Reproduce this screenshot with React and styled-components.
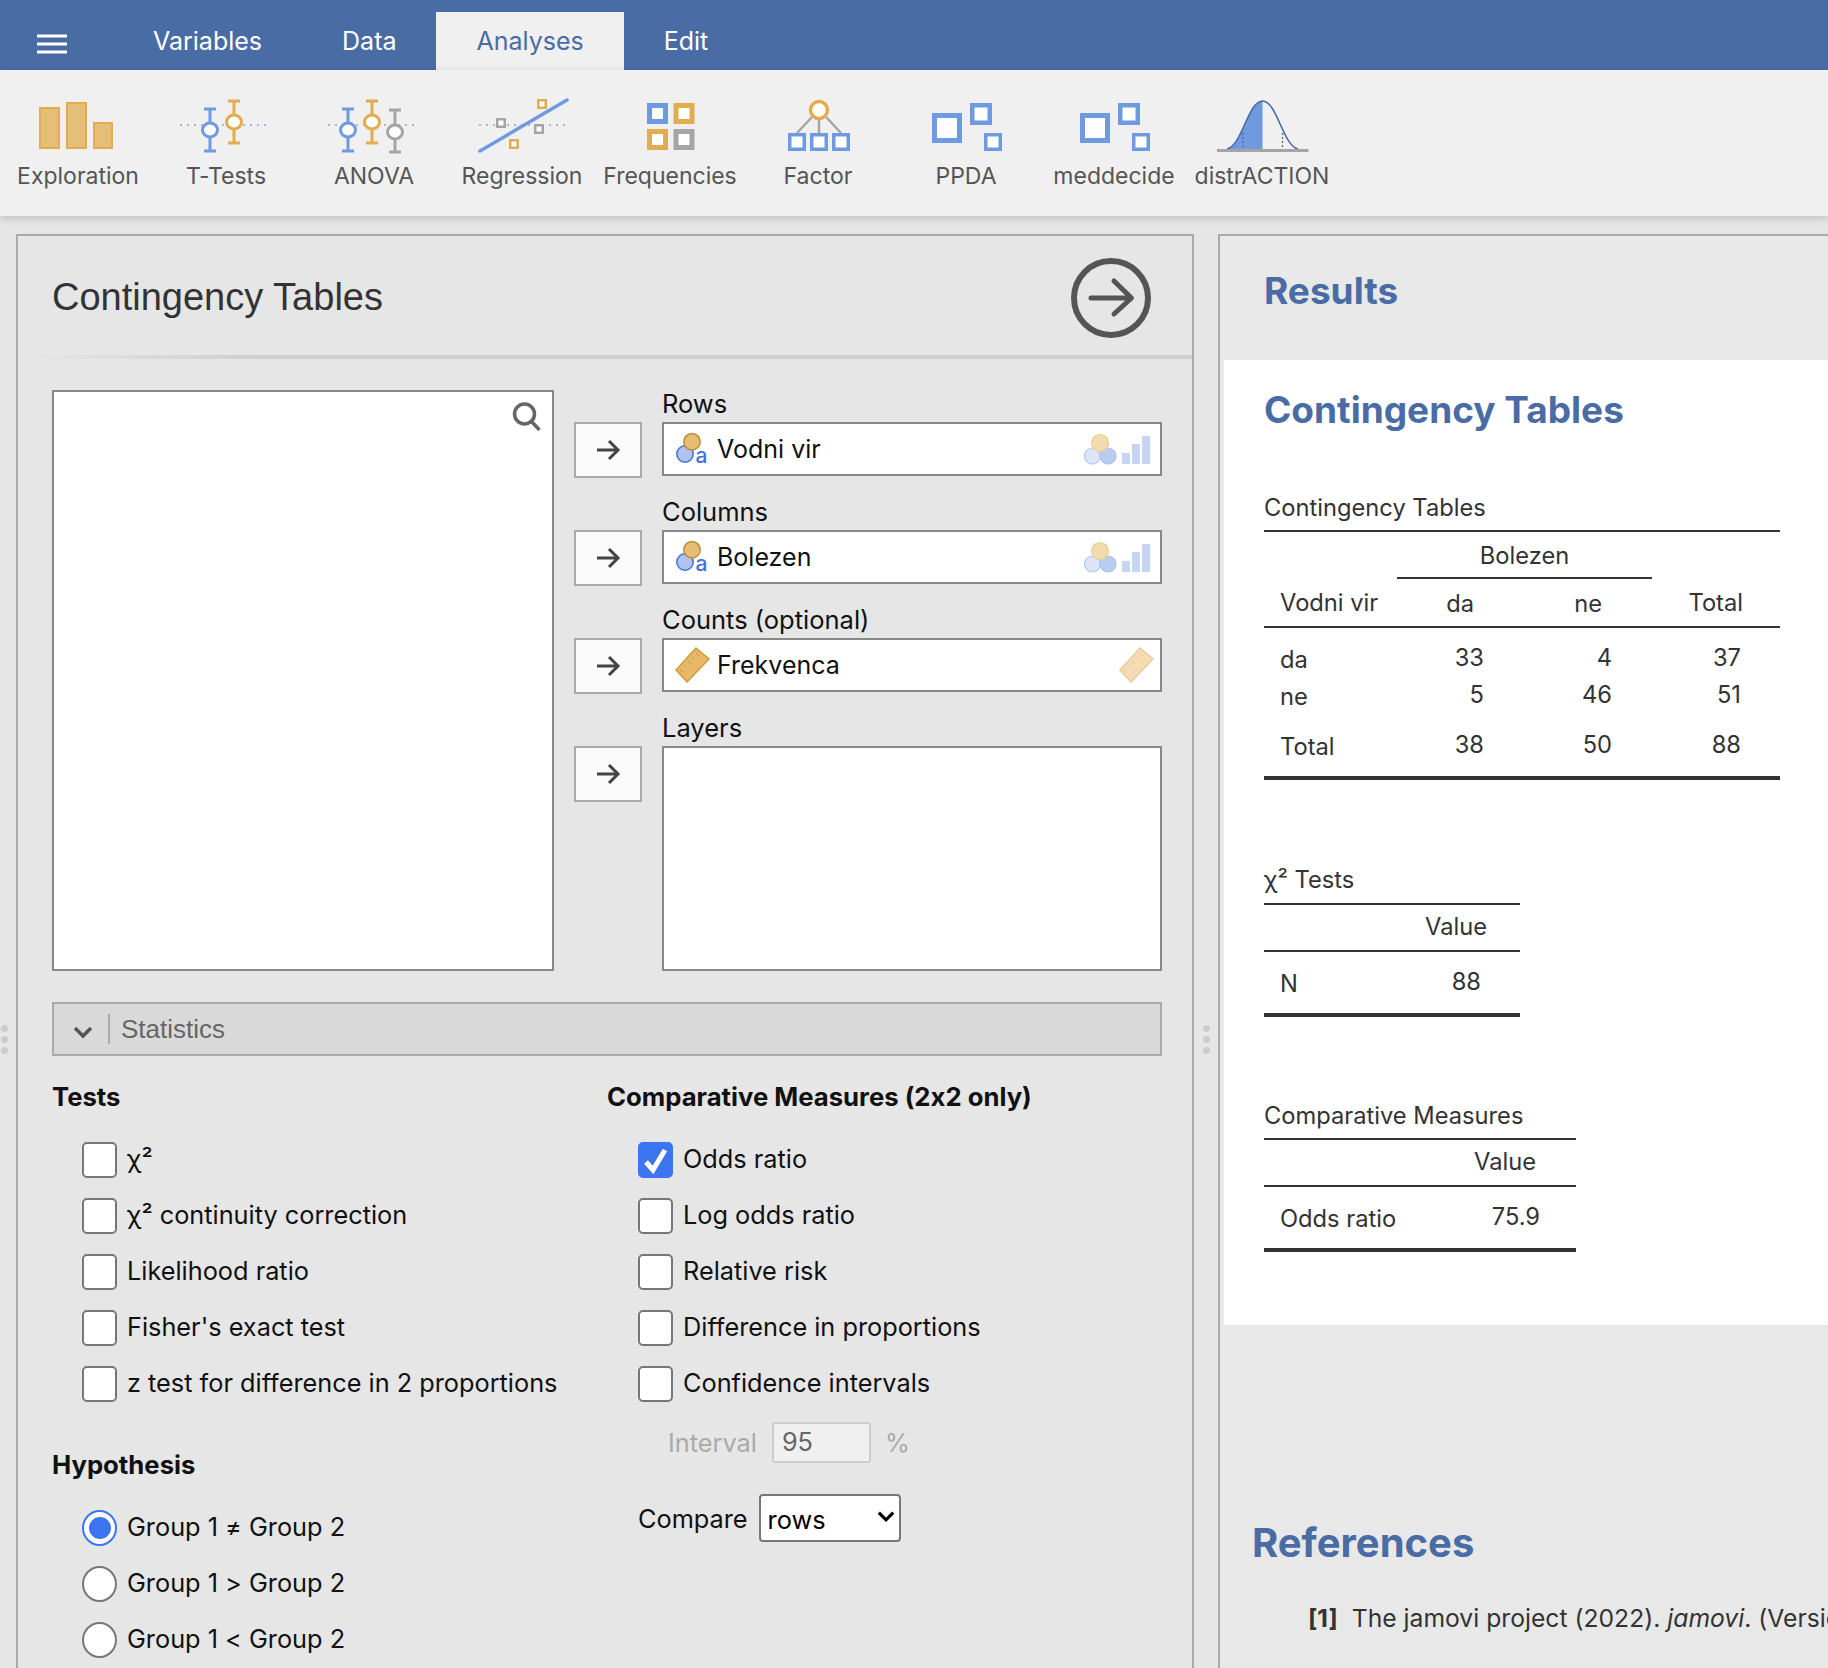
import React from "react";
import styled, { createGlobalStyle } from "styled-components";

const GlobalStyle = createGlobalStyle`
  html, body {
    margin: 0;
    height: 100%;
    overflow: hidden;
    font-family: Inter, "Liberation Sans", sans-serif;
    font-feature-settings: "calt" 0;
    color: #111;
  }
  * { box-sizing: border-box; }
`;

const Page = styled.div`
  height: 100vh;
  display: flex;
  flex-direction: column;
  background: #e6e6e6;
  overflow: hidden;
`;

const TopBar = styled.div`
  height: 70px;
  flex: none;
  display: flex;
  align-items: flex-end;
  background: #4a6ca5;
`;

const MenuButton = styled.div`
  width: 113px;
  height: 70px;
  padding: 34px 0 0 37px;
  svg { display: block; }
`;

const Tab = styled.div`
  height: 58px;
  padding: 0 40px;
  display: flex;
  align-items: center;
  font-size: 25px;
  color: ${(p) => (p.$active ? "#4a6ca5" : "#fff")};
  background: ${(p) => (p.$active ? "#f0f0f0" : "transparent")};
`;

const Toolbar = styled.div`
  height: 146px;
  flex: none;
  display: flex;
  padding: 28px 0 0 4px;
  background: #f0f0f0;
  box-shadow: 0 2px 8px rgba(0, 0, 0, 0.18);
  position: relative;
`;

const Tool = styled.div`
  width: 148px;
  display: flex;
  flex-direction: column;
  align-items: center;
  font-size: 23px;
  line-height: 34px;
  color: #555;
  white-space: nowrap;
  svg { display: block; flex: none; margin-bottom: 1px; }
`;

const Main = styled.div`
  flex: 1;
  min-height: 0;
  display: flex;
  padding-top: 18px;
`;

const Splitter = styled.div`
  width: ${(p) => p.$width}px;
  flex: none;
  padding: 791px 0 0 ${(p) => p.$inset || 0}px;
  display: flex;
  flex-direction: column;
  align-items: ${(p) => (p.$inset ? "flex-start" : "center")};
  gap: 4px;
  i {
    width: 7px;
    height: 7px;
    border-radius: 50%;
    background: #ccc;
  }
`;

const OptionsPanel = styled.div`
  width: 1178px;
  flex: none;
  border: 2px solid #aaa;
  border-bottom: 0;
`;

const PanelHeader = styled.div`
  height: 123px;
  display: flex;
  align-items: center;
  justify-content: space-between;
  padding: 4px 41px 0 34px;
  border-bottom: 4px solid;
  border-image: linear-gradient(to right, transparent 1%, #cfcfcf 20%) 1;
  h1 {
    margin: 0;
    font-family: "Liberation Sans", Arial, sans-serif;
    font-size: 38px;
    font-weight: 400;
    color: #333;
  }
`;

const PanelBody = styled.div`
  padding: 31px 30px 0 34px;
`;

const Supplier = styled.div`
  height: 581px;
  display: grid;
  grid-template-columns: 502px 1fr;
  gap: 20px;
`;

const VariableList = styled.div`
  position: relative;
  background: #fff;
  border: 2px solid #888;
  svg { position: absolute; top: 10px; right: 11px; }
`;

const Targets = styled.div`
  display: flex;
  flex-direction: column;
  gap: 20px;
`;

const TargetRow = styled.div`
  display: grid;
  grid-template-columns: 68px 500px;
  column-gap: 20px;
  grid-template-rows: 32px 56px;
  flex: ${(p) => (p.$grow ? 1 : "none")};
  ${(p) => p.$grow && "grid-template-rows: 32px 1fr;"}
`;

const TargetLabel = styled.div`
  grid-column: 2;
  font-size: 25.5px;
  line-height: 27px;
`;

const ArrowButton = styled.div`
  grid-column: 1;
  height: 56px;
  display: flex;
  align-items: center;
  justify-content: center;
  background: #fafafa;
  border: 2px solid #aaa;
`;

const Field = styled.div`
  grid-column: 2;
  height: ${(p) => (p.$grow ? "100%" : "54px")};
  display: flex;
  align-items: center;
  justify-content: space-between;
  padding: 0 10px;
  background: #fff;
  border: 2px solid #888;
  font-size: 25px;
`;

const FieldName = styled.div`
  display: flex;
  align-items: center;
  gap: 7px;
`;

const HintRuler = styled.span`
  display: flex;
  margin-right: -4px;
`;

const SectionBar = styled.div`
  height: 54px;
  margin-top: 31px;
  display: flex;
  align-items: center;
  background: #d9d9d9;
  border: 2px solid #aaa;
  color: #666;
  font-family: "Liberation Sans", Arial, sans-serif;
  font-size: 26px;
  svg { margin: 6px 0 0 19px; }
  span {
    height: 30px;
    margin-left: 15px;
    padding-left: 11px;
    border-left: 2px solid #aaa;
    line-height: 30px;
  }
`;

const Columns = styled.div`
  display: grid;
  grid-template-columns: 555px 1fr;
`;

const GroupTitle = styled.div`
  margin: ${(p) => p.$top}px 0 29px;
  font-size: 25.7px;
  line-height: 32px;
  font-weight: 700;
`;

const OptionList = styled.div`
  display: flex;
  flex-direction: column;
  gap: 20px;
  padding-left: ${(p) => p.$indent}px;
`;

const Option = styled.div`
  height: 36px;
  display: flex;
  align-items: center;
  gap: 10px;
  font-size: 25.3px;
  span { margin-top: -3px; }
`;

const Check = styled.div`
  width: 35px;
  height: 36px;
  flex: none;
  display: flex;
  align-items: center;
  justify-content: center;
  border-radius: 5px;
  border: 2px solid ${(p) => (p.$on ? "#3c75f0" : "#777")};
  background: ${(p) => (p.$on ? "#3c75f0" : "#fff")};
`;

const Radio = styled.div`
  width: 35px;
  height: 36px;
  flex: none;
  border-radius: 50%;
  border: 2px solid ${(p) => (p.$on ? "#3c75f0" : "#777")};
  background: #fff;
  display: flex;
  align-items: center;
  justify-content: center;
  i {
    width: 22px;
    height: 22px;
    border-radius: 50%;
    background: #3c75f0;
  }
`;

const IntervalRow = styled.div`
  margin: 20px 0 0 61px;
  height: 41px;
  display: flex;
  align-items: center;
  font-size: 25.3px;
  color: #aaa;
`;

const IntervalInput = styled.div`
  width: 99px;
  height: 41px;
  margin: 0 14px 0 15px;
  padding-left: 8px;
  border: 2px solid #ccc;
  border-radius: 3px;
  background: #f0f0f0;
  color: #666;
  line-height: 35px;
`;

const CompareRow = styled.div`
  margin: 31px 0 0 31px;
  display: flex;
  align-items: center;
  gap: 11px;
  font-size: 25.3px;
`;

const SelectWrap = styled.div`
  position: relative;
  width: 142px;
  height: 48px;
  svg { position: absolute; top: 16px; right: 6px; pointer-events: none; }
`;

const Select = styled.select`
  appearance: none;
  width: 100%;
  height: 100%;
  padding: 2px 0 0 7px;
  border: 2px solid #777;
  border-radius: 4px;
  background: #fff;
  font: inherit;
  color: #000;
`;

const ResultsPanel = styled.div`
  flex: 1;
  min-width: 0;
  padding-left: 4px;
  border-top: 2px solid #aaa;
  border-left: 2px solid #aaa;
  background: #e8e8e8;
  overflow: hidden;
`;

const Heading = styled.h2`
  margin: ${(p) => p.$margin};
  font-size: ${(p) => p.$size || 37}px;
  line-height: 50px;
  font-weight: 700;
  color: #4a6ca5;
`;

const ResultsSheet = styled.div`
  margin-top: 44px;
  padding: 25px 0 73px 40px;
  background: #fff;
  color: #333;
  font-size: 23.7px;
`;

const TableBlock = styled.div`
  width: ${(p) => p.$width}px;
  margin-top: ${(p) => p.$top}px;
  border-bottom: 4px solid #333;
`;

const TableTitle = styled.div`
  line-height: 34px;
  padding-bottom: ${(p) => p.$pad}px;
  border-bottom: 2px solid #333;
`;

const Table = styled.table`
  width: 100%;
  table-layout: fixed;
  border-collapse: collapse;
`;

const Row = styled.tr`
  height: ${(p) => p.$h}px;
  border-bottom: ${(p) => (p.$line ? "2px solid #333" : "0")};
`;

const Cell = styled.td`
  padding: ${(p) => p.$top || 0}px ${(p) => p.$right || 0}px 0 ${(p) => p.$left || 0}px;
  vertical-align: top;
  line-height: 30px;
  text-align: ${(p) => p.$align || "right"};
  border-bottom: ${(p) => (p.$line ? "2px solid #333" : "0")};
`;

const RefLine = styled.div`
  margin: 33px 0 0 84px;
  display: flex;
  gap: 14px;
  font-size: 24.7px;
  line-height: 34px;
  color: #333;
  white-space: nowrap;
  b { font-weight: 700; }
`;

const Whisker = ({ x, y1, y2, cy, color }) => (
  <g stroke={color} strokeWidth="3" fill="none">
    <path d={`M${x} ${y1}V${y2}M${x - 6} ${y1}H${x + 6}M${x - 6} ${y2}H${x + 6}`} />
    <ellipse cx={x} cy={cy} rx="7.5" ry="7" fill="#fff" />
  </g>
);

const DotLine = ({ x1, x2 }) => (
  <path d={`M${x1} 27H${x2}`} stroke="#6b7f9e" strokeWidth="1.2" strokeDasharray="2 5" />
);

const Square = ({ x, y, s, w, color }) => (
  <rect x={x + w / 2} y={y + w / 2} width={s - w} height={s - w} fill="#fff" stroke={color} strokeWidth={w} />
);

const Blue = "#6f9ae0";
const Orange = "#e2ad50";
const Gray = "#a5a5a5";

const ExplorationIcon = () => (
  <svg width="100" height="60">
    <g fill="#e6bf76" stroke={Orange} strokeWidth="2">
      <rect x="12" y="10" width="19" height="40" />
      <rect x="39" y="5" width="19" height="45" />
      <rect x="66" y="25" width="18" height="25" />
    </g>
  </svg>
);

const TTestsIcon = () => (
  <svg width="100" height="60">
    <DotLine x1="4" x2="94" />
    <Whisker x={34} y1={11} y2={53} cy={32} color={Blue} />
    <Whisker x={58} y1={3} y2={45} cy={24} color={Orange} />
  </svg>
);

const AnovaIcon = () => (
  <svg width="100" height="60">
    <DotLine x1="4" x2="93" />
    <Whisker x={24} y1={11} y2={53} cy={32} color={Blue} />
    <Whisker x={48} y1={3} y2={45} cy={24} color={Orange} />
    <Whisker x={71} y1={12} y2={54} cy={34} color={Gray} />
  </svg>
);

const RegressionIcon = () => (
  <svg width="100" height="60">
    <DotLine x1="7" x2="97" />
    <path d="M8 53L95 2" stroke={Blue} strokeWidth="3.5" strokeLinecap="round" />
    <Square x={24} y={20} s={10} w={2.5} color={Gray} />
    <Square x={65} y={1} s={10} w={2.5} color={Orange} />
    <Square x={62} y={26} s={10} w={2.5} color={Gray} />
    <Square x={37} y={41} s={10} w={2.5} color={Orange} />
  </svg>
);

const FrequenciesIcon = () => (
  <svg width="100" height="60">
    <Square x={27} y={5} s={21} w={5} color={Blue} />
    <Square x={53.5} y={5} s={21} w={5} color={Orange} />
    <Square x={27} y={31} s={21} w={5} color={Orange} />
    <Square x={53.5} y={31} s={21} w={5} color={Gray} />
  </svg>
);

const FactorIcon = () => (
  <svg width="100" height="60">
    <path d="M44 19L29 35M51 20V35M58 19L73 35" stroke={Gray} strokeWidth="2.5" fill="none" />
    <ellipse cx="51" cy="12" rx="8.5" ry="8.5" fill="#fff" stroke={Orange} strokeWidth="3.5" />
    <Square x={20} y={35} s={18} w={3.5} color={Blue} />
    <Square x={42} y={35} s={18} w={3.5} color={Blue} />
    <Square x={64} y={35} s={18} w={3.5} color={Blue} />
  </svg>
);

const ModulesIcon = () => (
  <svg width="100" height="60">
    <Square x={16} y={15} s={30} w={5} color={Blue} />
    <Square x={54} y={5} s={22} w={4.5} color={Blue} />
    <Square x={68} y={35} s={18} w={3.5} color={Blue} />
  </svg>
);

const DistrIcon = () => (
  <svg width="100" height="60">
    <path d="M15 51C30 48 36 3 50.5 3V51Z" fill={Blue} />
    <path d="M15 51C30 48 36 3 50.5 3C65 3 71 48 86 51" fill="none" stroke="#4a6ca5" strokeWidth="1.5" />
    <path d="M31 35V51M70.5 35V51" stroke="#4a6ca5" strokeWidth="1.3" strokeDasharray="2 2" />
    <path d="M5 52.5H96.5" stroke={Gray} strokeWidth="3" />
  </svg>
);

const tools = [
  ["Exploration", ExplorationIcon],
  ["T-Tests", TTestsIcon],
  ["ANOVA", AnovaIcon],
  ["Regression", RegressionIcon],
  ["Frequencies", FrequenciesIcon],
  ["Factor", FactorIcon],
  ["PPDA", ModulesIcon],
  ["meddecide", ModulesIcon],
  ["distrACTION", DistrIcon],
];

const MenuIcon = () => (
  <svg width="30" height="20">
    <path d="M0 2H30M0 10H30M0 18H30" stroke="#fff" strokeWidth="3" />
  </svg>
);

const SearchIcon = () => (
  <svg width="30" height="30" fill="none" stroke="#666" strokeWidth="3.5">
    <circle cx="13.5" cy="12" r="10" />
    <path d="M21 20L28.5 28" />
  </svg>
);

const RunIcon = () => (
  <svg width="80" height="80" fill="none" stroke="#555" strokeLinecap="round" strokeLinejoin="round">
    <circle cx="40" cy="40" r="37" strokeWidth="6" />
    <path d="M20 40H60M43 23L60.5 40L43 56" strokeWidth="5" />
  </svg>
);

const ArrowIcon = () => (
  <svg width="26" height="22" fill="none" stroke="#444" strokeWidth="3">
    <path d="M2 11H23M14 2L23 11L14 20" />
  </svg>
);

const NominalTextIcon = () => (
  <svg width="36" height="38">
    <circle cx="11" cy="24" r="8.2" fill="#aec4ee" stroke="#3f72dc" strokeWidth="1.5" />
    <circle cx="18" cy="11.7" r="8.2" fill="#e8bd72" stroke="#b98a3c" strokeWidth="1.5" />
    <text x="21.5" y="33" fontSize="21" fontWeight="500" fill="#3f72dc">a</text>
  </svg>
);

const NominalHintIcon = () => (
  <svg width="66" height="32">
    <circle cx="8.5" cy="23" r="8" fill="#dbe5f7" stroke="#b4c9f0" strokeWidth="1.2" />
    <circle cx="24" cy="23" r="8" fill="#b9cdf1" stroke="#a7c0ee" strokeWidth="1.2" />
    <circle cx="16" cy="10" r="8.5" fill="#f2dcae" stroke="#e8cd97" strokeWidth="1.2" />
    <rect x="38" y="20" width="8" height="11" fill="#c5d5f2" />
    <rect x="48" y="11" width="8" height="20" fill="#c5d5f2" />
    <rect x="58" y="3" width="8" height="28" fill="#c5d5f2" />
  </svg>
);

const RulerIcon = ({ faded }) => (
  <svg width="36" height="36" opacity={faded ? 0.5 : 1}>
    <path d="M22 1L35 12L13 35L2 23Z" fill="#e8b868" stroke="#d49a3e" strokeWidth="1.5" />
    <path d="M22 6L25 9M18 10L20 12M14 14L17 17M10 18L12 20M6 22L9 25" stroke="#c9943a" strokeWidth="1" />
  </svg>
);

const ChevronIcon = ({ size = 20, width = 3.5, color = "#555" }) => (
  <svg width={size} height={size * 0.7} viewBox="0 0 20 14" fill="none" stroke={color} strokeWidth={width}>
    <path d="M2 3L10 11L18 3" />
  </svg>
);

const tick = (
  <svg width="25" height="27" fill="none" stroke="#fff" strokeWidth="5">
    <path d="M3 15L10 23L22 3" />
  </svg>
);

const Target = ({ label, name, icon, hint }) => (
  <TargetRow>
    <TargetLabel>{label}</TargetLabel>
    <ArrowButton>
      <ArrowIcon />
    </ArrowButton>
    <Field>
      <FieldName>
        {icon}
        {name}
      </FieldName>
      {hint}
    </Field>
  </TargetRow>
);

const CheckRow = ({ label, on }) => (
  <Option>
    <Check $on={on}>{on && tick}</Check>
    <span>{label}</span>
  </Option>
);

const RadioRow = ({ label, on }) => (
  <Option>
    <Radio $on={on}>{on && <i />}</Radio>
    <span>{label}</span>
  </Option>
);

const App = () => {
  return (
    <Page>
      <GlobalStyle />
      <TopBar>
        <MenuButton>
          <MenuIcon />
        </MenuButton>
        <Tab>Variables</Tab>
        <Tab>Data</Tab>
        <Tab $active>Analyses</Tab>
        <Tab>Edit</Tab>
      </TopBar>
      <Toolbar>
        {tools.map(([name, Icon]) => (
          <Tool key={name}>
            <Icon />
            {name}
          </Tool>
        ))}
      </Toolbar>
      <Main>
        <Splitter $width={16} $inset={1}>
          <i />
          <i />
          <i />
        </Splitter>
        <OptionsPanel>
          <PanelHeader>
            <h1>Contingency Tables</h1>
            <RunIcon />
          </PanelHeader>
          <PanelBody>
            <Supplier>
              <VariableList>
                <SearchIcon />
              </VariableList>
              <Targets>
                <Target label="Rows" name="Vodni vir" icon={<NominalTextIcon />} hint={<NominalHintIcon />} />
                <Target label="Columns" name="Bolezen" icon={<NominalTextIcon />} hint={<NominalHintIcon />} />
                <Target
                  label="Counts (optional)"
                  name="Frekvenca"
                  icon={<RulerIcon />}
                  hint={
                    <HintRuler>
                      <RulerIcon faded />
                    </HintRuler>
                  }
                />
                <TargetRow $grow>
                  <TargetLabel>Layers</TargetLabel>
                  <ArrowButton>
                    <ArrowIcon />
                  </ArrowButton>
                  <Field $grow />
                </TargetRow>
              </Targets>
            </Supplier>
            <SectionBar>
              <ChevronIcon />
              <span>Statistics</span>
            </SectionBar>
            <Columns>
              <div>
                <GroupTitle $top={25}>Tests</GroupTitle>
                <OptionList $indent={30}>
                  <CheckRow label="χ²" />
                  <CheckRow label="χ² continuity correction" />
                  <CheckRow label="Likelihood ratio" />
                  <CheckRow label="Fisher's exact test" />
                  <CheckRow label="z test for difference in 2 proportions" />
                </OptionList>
                <GroupTitle $top={47}>Hypothesis</GroupTitle>
                <OptionList $indent={30}>
                  <RadioRow label="Group 1 ≠ Group 2" on />
                  <RadioRow label="Group 1 > Group 2" />
                  <RadioRow label="Group 1 < Group 2" />
                </OptionList>
              </div>
              <div>
                <GroupTitle $top={25}>Comparative Measures (2x2 only)</GroupTitle>
                <OptionList $indent={31}>
                  <CheckRow label="Odds ratio" on />
                  <CheckRow label="Log odds ratio" />
                  <CheckRow label="Relative risk" />
                  <CheckRow label="Difference in proportions" />
                  <CheckRow label="Confidence intervals" />
                </OptionList>
                <IntervalRow>
                  Interval
                  <IntervalInput>95</IntervalInput>%
                </IntervalRow>
                <CompareRow>
                  Compare
                  <SelectWrap>
                    <Select defaultValue="rows">
                      <option value="rows">rows</option>
                      <option value="columns">columns</option>
                    </Select>
                    <ChevronIcon size={18} width={3.5} color="#000" />
                  </SelectWrap>
                </CompareRow>
              </div>
            </Columns>
          </PanelBody>
        </OptionsPanel>
        <Splitter $width={24}>
          <i />
          <i />
          <i />
        </Splitter>
        <ResultsPanel>
          <Heading $margin="30px 0 0 40px">Results</Heading>
          <ResultsSheet>
            <Heading $margin="0">Contingency Tables</Heading>
            <TableBlock $width={516} $top={56}>
              <TableTitle $pad={5}>Contingency Tables</TableTitle>
              <Table>
                <colgroup>
                  <col width="133" />
                  <col width="128" />
                  <col width="127" />
                  <col width="128" />
                </colgroup>
                <tbody>
                  <Row $h={46}>
                    <Cell />
                    <Cell colSpan={2} $align="center" $top={9} $line>Bolezen</Cell>
                    <Cell />
                  </Row>
                  <Row $h={49} $line>
                    <Cell $align="left" $left={16} $top={10}>Vodni vir</Cell>
                    <Cell $top={10} $right={51}>da</Cell>
                    <Cell $top={10} $right={50}>ne</Cell>
                    <Cell $top={10} $right={37}>Total</Cell>
                  </Row>
                  <Row $h={48}>
                    <Cell $align="left" $left={16} $top={17}>da</Cell>
                    <Cell $top={15} $right={41}>33</Cell>
                    <Cell $top={15} $right={40}>4</Cell>
                    <Cell $top={15} $right={39}>37</Cell>
                  </Row>
                  <Row $h={38}>
                    <Cell $align="left" $left={16} $top={7}>ne</Cell>
                    <Cell $top={5} $right={41}>5</Cell>
                    <Cell $top={5} $right={40}>46</Cell>
                    <Cell $top={5} $right={39}>51</Cell>
                  </Row>
                  <Row $h={63}>
                    <Cell $align="left" $left={16} $top={19}>Total</Cell>
                    <Cell $top={17} $right={41}>38</Cell>
                    <Cell $top={17} $right={40}>50</Cell>
                    <Cell $top={17} $right={39}>88</Cell>
                  </Row>
                </tbody>
              </Table>
            </TableBlock>
            <TableBlock $width={256} $top={83}>
              <TableTitle $pad={6}>χ² Tests</TableTitle>
              <Table>
                <tbody>
                  <Row $h={46} $line>
                    <Cell />
                    <Cell $top={7} $right={33}>Value</Cell>
                  </Row>
                  <Row $h={62}>
                    <Cell $align="left" $left={16} $top={17}>N</Cell>
                    <Cell $top={15} $right={39}>88</Cell>
                  </Row>
                </tbody>
              </Table>
            </TableBlock>
            <TableBlock $width={312} $top={82}>
              <TableTitle $pad={5}>Comparative Measures</TableTitle>
              <Table>
                <tbody>
                  <Row $h={46} $line>
                    <Cell />
                    <Cell $top={7} $right={40}>Value</Cell>
                  </Row>
                  <Row $h={62}>
                    <Cell $align="left" $left={16} $top={17}>Odds ratio</Cell>
                    <Cell $top={15} $right={36}>75.9</Cell>
                  </Row>
                </tbody>
              </Table>
            </TableBlock>
          </ResultsSheet>
          <Heading $margin="193px 0 0 28px" $size={40}>References</Heading>
          <RefLine>
            <b>[1]</b>
            <span>
              The jamovi project (2022). <i>jamovi</i>. (Version 2.3) [Computer Software]. Retrieved from https://www.jamovi.org.
            </span>
          </RefLine>
        </ResultsPanel>
      </Main>
    </Page>
  );
};

export default App;
